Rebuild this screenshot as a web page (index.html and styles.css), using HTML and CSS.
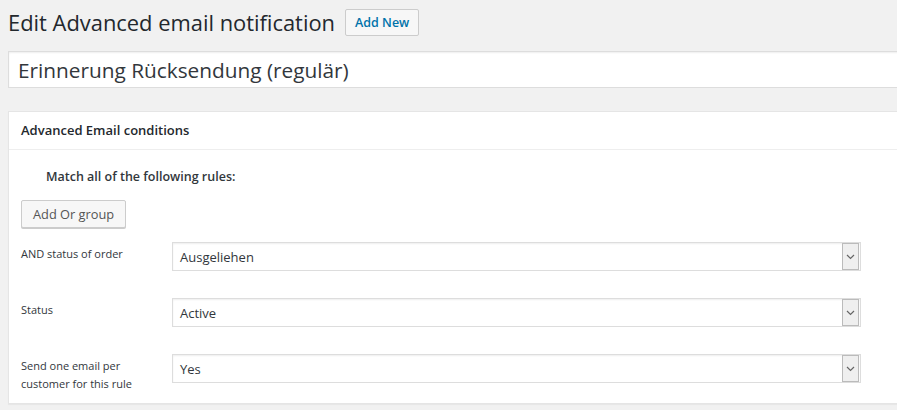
FILE: index.html
```html
<html>

<head>
	<meta charset="utf-8">
	<title>Edit Advanced email notification</title>
	<link rel="stylesheet" href="styles.css">
</head>

<body>
	<div class="wrap">
		<div class="heading">
			<h1>Edit Advanced email notification</h1>
			<a class="add-new" href="#">Add New</a>
		</div>

		<div class="titlediv">
			<input class="title" type="text" value="Erinnerung Rücksendung (regulär)">
		</div>

		<div class="postbox">
			<h2 class="hndle">Advanced Email conditions</h2>
			<div class="inside">
				<p class="match">Match all of the following rules:</p>
				<button class="button">Add Or group</button>

				<div class="rule">
					<label>AND status of order</label>
					<div class="select">
						<span>Ausgeliehen</span>
						<span class="arrow">
							<svg width="9" height="6" viewBox="0 0 9 6">
								<path d="M1 1 L4.5 4.5 L8 1" fill="none" stroke="#666" stroke-width="1.2" />
							</svg>
						</span>
					</div>
				</div>

				<div class="rule">
					<label>Status</label>
					<div class="select">
						<span>Active</span>
						<span class="arrow">
							<svg width="9" height="6" viewBox="0 0 9 6">
								<path d="M1 1 L4.5 4.5 L8 1" fill="none" stroke="#666" stroke-width="1.2" />
							</svg>
						</span>
					</div>
				</div>

				<div class="rule">
					<label>Send one email per customer for this rule</label>
					<div class="select">
						<span>Yes</span>
						<span class="arrow">
							<svg width="9" height="6" viewBox="0 0 9 6">
								<path d="M1 1 L4.5 4.5 L8 1" fill="none" stroke="#666" stroke-width="1.2" />
							</svg>
						</span>
					</div>
				</div>
			</div>
		</div>
	</div>
</body>

</html>
```

FILE: styles.css
```css
html {
	background-color: #f1f1f1;
}

body {
	margin: 0;
	font-family: "Open Sans", "Noto Sans", sans-serif;
	color: #23282d;
	overflow: hidden;
}

.wrap {
	padding: 9px 0 0 8px;
	width: 920px;
}

.heading {
	display: flex;
	align-items: center;
	gap: 10px;
	height: 27px;
}

h1 {
	margin: 0;
	font-size: 21.9px;
	font-weight: 400;
	color: #23282d;
}

.add-new {
	display: block;
	box-sizing: border-box;
	height: 27px;
	padding: 0 9px;
	line-height: 25px;
	font-size: 12.5px;
	font-weight: 600;
	color: #0073aa;
	text-decoration: none;
	background-color: #f7f7f7;
	border: 1px solid #ccc;
	border-radius: 2px;
}

.titlediv {
	margin-top: 15px;
}

.title {
	display: block;
	box-sizing: border-box;
	width: 100%;
	height: 37px;
	padding: 0 9px;
	font-family: "Open Sans", "Noto Sans", sans-serif;
	font-size: 20.8px;
	color: #32373c;
	background-color: #fff;
	border: 1px solid #ddd;
	box-shadow: inset 0 1px 2px rgba(0, 0, 0, 0.07);
	outline: none;
}

.postbox {
	margin-top: 23px;
	background-color: #fff;
	border: 1px solid #e5e5e5;
	box-shadow: 0 1px 1px rgba(0, 0, 0, 0.04);
	height: 291px;
}

.hndle {
	margin: 0;
	padding: 0 12px;
	height: 37px;
	line-height: 37px;
	font-size: 13px;
	font-weight: 600;
	border-bottom: 1px solid #eee;
}

.inside {
	padding: 0 12px;
}

.match {
	margin: 18px 0 0 25px;
	font-size: 12.5px;
	font-weight: 600;
	line-height: 18px;
	color: #32373c;
}

.button {
	display: block;
	box-sizing: border-box;
	margin-top: 14px;
	height: 28px;
	padding: 0 11px;
	font-family: "Open Sans", "Noto Sans", sans-serif;
	font-size: 12.8px;
	color: #555;
	background-color: #f7f7f7;
	border: 1px solid #ccc;
	border-radius: 2px;
	box-shadow: 0 1px 0 #ccc;
}

.rule {
	display: flex;
	align-items: flex-start;
	margin-top: 14px;
	height: 43px;
}

.rule + .rule {
	margin-top: 13px;
}

.rule label {
	box-sizing: border-box;
	width: 151px;
	padding: 3px 24px 0 0;
	font-size: 11px;
	line-height: 18px;
	color: #32373c;
}

.select {
	display: flex;
	align-items: center;
	justify-content: space-between;
	box-sizing: border-box;
	width: 689px;
	height: 29px;
	padding: 0 1px 0 7px;
	font-size: 13px;
	color: #32373c;
	border: 1px solid #ddd;
	box-shadow: inset 0 1px 2px rgba(0, 0, 0, 0.07);
}

.arrow {
	display: flex;
	align-items: center;
	justify-content: center;
	box-sizing: border-box;
	width: 17px;
	height: 27px;
	background-color: #efefef;
	border: 1px solid #bbb;
}
```
